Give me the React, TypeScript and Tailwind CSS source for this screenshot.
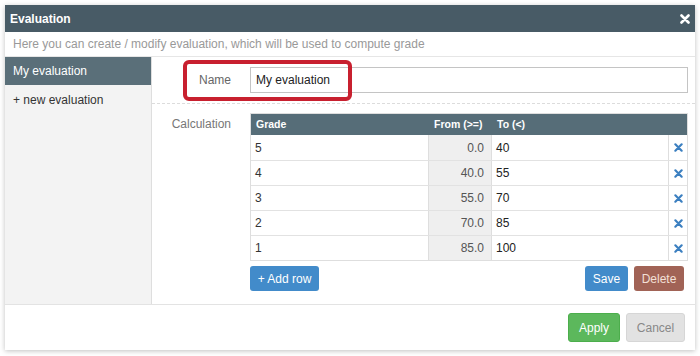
import React from "react";

const rows = [
  { grade: "5", from: "0.0", to: "40" },
  { grade: "4", from: "40.0", to: "55" },
  { grade: "3", from: "55.0", to: "70" },
  { grade: "2", from: "70.0", to: "85" },
  { grade: "1", from: "85.0", to: "100" },
];

const Cross = ({ size, color, stroke }: { size: number; color: string; stroke: number }) => (
  <svg width={size} height={size} viewBox="0 0 10 10">
    <path d="M1.5 1.5 L8.5 8.5 M8.5 1.5 L1.5 8.5" stroke={color} strokeWidth={stroke} strokeLinecap="round" />
  </svg>
);

const App = () => {
  return (
    <div className="w-[700px] h-[356px] bg-white font-['Liberation_Sans',Arial,sans-serif] text-[12px] text-[#333]">
      <div className="relative ml-[5px] mt-[5px] w-[690px] h-[345px] flex flex-col bg-white shadow-[0_1px_5px_rgba(0,0,0,0.25)]">
        {/* HEADER */}
        <div className="h-[27px] shrink-0 bg-[#485b66] flex items-center justify-between pl-[5px] pr-[5px]">
          <span className="text-white font-bold text-[12px]">Evaluation</span>
          <Cross size={10} color="#ffffff" stroke={2.6} />
        </div>
        {/* SUBTITLE */}
        <div className="h-[25px] shrink-0 flex items-center pl-[8px] border-b border-[#e6e6e6] text-[#999] text-[12px]">
          Here you can create / modify evaluation, which will be used to compute grade
        </div>
        {/* BODY */}
        <div className="flex h-[248px] shrink-0 border-b border-[#e3e3e3]">
          <div className="w-[147px] shrink-0 bg-[#f3f3f3] border-r border-[#dedede]">
            <div className="h-[28px] bg-[#5a6f79] text-white flex items-center pl-[8px]">My evaluation</div>
            <div className="h-[29px] flex items-center pl-[8px]">+ new evaluation</div>
          </div>
          <div className="flex-1 flex flex-col">
            <div className="h-[47px] shrink-0 flex items-center border-b border-dashed border-[#dcdcdc]">
              <div className="w-[79px] text-right text-[#666]">Name</div>
              <div className="ml-[19px] mr-[7px] flex-1 h-[26px] border border-[#c4c4c4] flex items-center pl-[5px] text-[#222]">
                My evaluation
              </div>
            </div>
            <div className="flex pt-[9px]">
              <div className="w-[79px] text-right text-[#777] pt-[2px]">Calculation</div>
              <div className="ml-[19px] mr-[7px] flex-1 flex flex-col">
                <div className="border border-[#dedede]">
                  <div className="h-[21px] bg-[#566d78] flex items-center text-white font-bold text-[10.5px]">
                    <div className="w-[178px] pl-[5px]">Grade</div>
                    <div className="w-[63px] pl-[5px]">From (&gt;=)</div>
                    <div className="pl-[5px]">To (&lt;)</div>
                  </div>
                  {rows.map((r, i) => (
                    <div key={r.grade} className={`h-[25px] flex ${i > 0 ? "border-t border-[#e2e2e2]" : ""}`}>
                      <div className="w-[178px] flex items-center pl-[4px] border-r border-[#dedede]">{r.grade}</div>
                      <div className="w-[63px] flex items-center justify-end pr-[7px] bg-[#efefef] text-[#555] border-r border-[#dedede]">
                        {r.from}
                      </div>
                      <div className="flex-1 flex items-center pl-[4px] border-r border-[#dedede] text-[#222]">{r.to}</div>
                      <div className="w-[18px] flex items-center justify-center">
                        <Cross size={9} color="#3b7fc0" stroke={2.4} />
                      </div>
                    </div>
                  ))}
                </div>
                <div className="flex items-center mt-[5px] mr-[4px]">
                  <button className="h-[25px] w-[69px] bg-[#428bca] text-white rounded-[3px] text-[12px]">+ Add row</button>
                  <div className="flex-1" />
                  <button className="h-[25px] w-[43px] bg-[#428bca] text-white rounded-[3px] text-[12px]">Save</button>
                  <button className="ml-[6px] h-[25px] w-[50px] bg-[#a16356] text-[#f3e0d6] rounded-[3px] text-[12px]">Delete</button>
                </div>
              </div>
            </div>
          </div>
        </div>
        {/* FOOTER */}
        <div className="flex-1 flex items-center justify-end gap-[6px] pr-[10px]">
          <button className="h-[29px] w-[52px] bg-[#5cb85c] text-white rounded-[3px] text-[12px] border border-[#4cae4c]">Apply</button>
          <button className="h-[29px] w-[59px] bg-[#e2e2e2] text-[#888] rounded-[3px] text-[12px] border border-[#d6d6d6]">Cancel</button>
        </div>
        {/* ANNOTATION */}
        <div className="absolute left-[178px] top-[55px] w-[169px] h-[41px] border-[4px] border-[#c8202f] rounded-[6px]" />
      </div>
    </div>
  );
};

export default App;
